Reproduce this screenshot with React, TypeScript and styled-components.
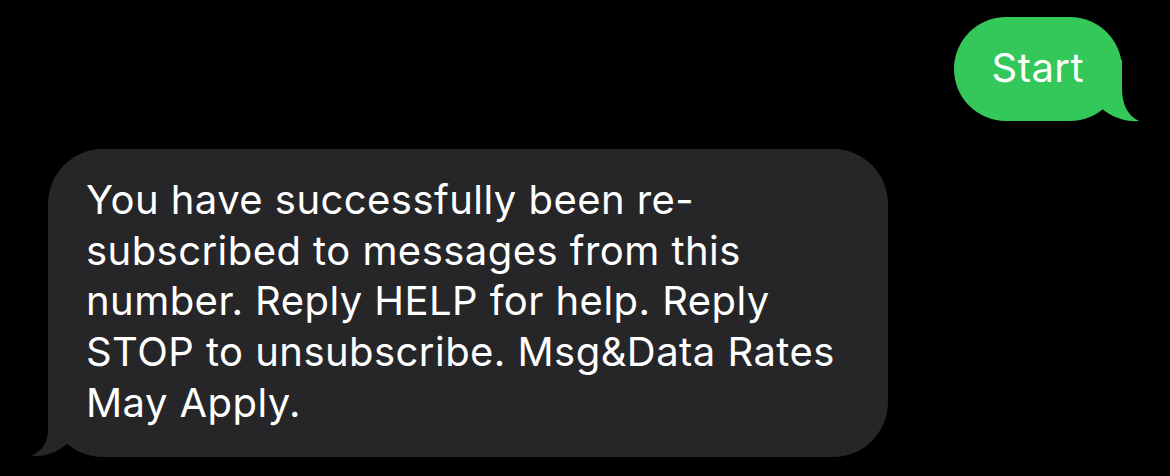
import React from "react";
import styled, { createGlobalStyle } from "styled-components";

const Global = createGlobalStyle`
  html, body {
    margin: 0;
    padding: 0;
    background: #000000;
  }
  body {
    font-family: Inter, "Noto Sans", "Liberation Sans", sans-serif;
    -webkit-font-smoothing: antialiased;
  }
`;

const Thread = styled.div`
  width: 1170px;
  height: 476px;
  box-sizing: border-box;
  display: flex;
  flex-direction: column;
  gap: 28px;
  padding: 17px 48px 0 48px;
  background: #000000;
  overflow: hidden;
`;

const Row = styled.div<{ $outgoing?: boolean }>`
  display: flex;
  justify-content: ${(p) => (p.$outgoing ? "flex-end" : "flex-start")};
`;

const Bubble = styled.div<{ $outgoing?: boolean }>`
  position: relative;
  box-sizing: border-box;
  background: ${(p) => (p.$outgoing ? "#34c759" : "#262629")};
  color: #ffffff;
  font-size: 40px;
  font-weight: 400;
  line-height: 50.7px;
  letter-spacing: 0.45px;
  border-radius: ${(p) => (p.$outgoing ? "52px" : "55px")};
  padding: ${(p) => (p.$outgoing ? "26px 38px 27px 38px" : "26px 38px 27px 38px")};
  width: ${(p) => (p.$outgoing ? "auto" : "840px")};
  height: ${(p) => (p.$outgoing ? "104px" : "308px")};
`;

const Line = styled.span`
  display: block;
  white-space: nowrap;
`;

const Tail = styled.svg<{ $outgoing?: boolean }>`
  position: absolute;
  width: 40px;
  height: 62px;
  ${(p) =>
    p.$outgoing
      ? "right: -18px; bottom: -1px;"
      : "left: -20px; bottom: 0px;"}
`;

const OutTail = () => (
  <Tail $outgoing viewBox="0 0 40 62" aria-hidden>
    <path
      d="M0,0 H22 V28 C22,42 26,55 39,61 C27,62 13,58 2,49 Z"
      fill="#34c759"
    />
  </Tail>
);

const InTail = () => (
  <Tail viewBox="0 0 40 62" aria-hidden>
    <path
      d="M40,0 H20 V35 C20,47 14,56 3,61 C16,62 28,58 39,49 Z"
      fill="#262629"
    />
  </Tail>
);

export default function App() {
  return (
    <>
      <Global />
      <Thread>
        <Row $outgoing>
          <Bubble $outgoing>
            <Line>Start</Line>
            <OutTail />
          </Bubble>
        </Row>
        <Row>
          <Bubble>
            <Line>You have successfully been re-</Line>
            <Line>subscribed to messages from this</Line>
            <Line>number. Reply HELP for help. Reply</Line>
            <Line>STOP to unsubscribe. Msg&amp;Data Rates</Line>
            <Line>May Apply.</Line>
            <InTail />
          </Bubble>
        </Row>
      </Thread>
    </>
  );
}
